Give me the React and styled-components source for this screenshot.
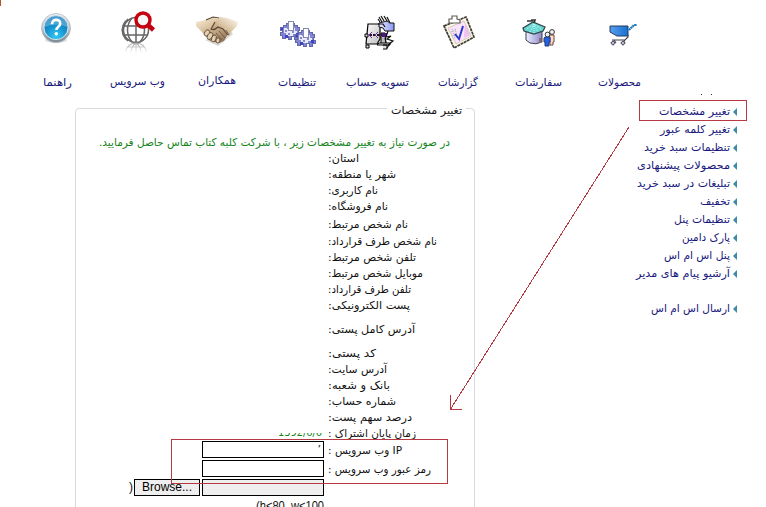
import React, { useLayoutEffect, useRef } from "react";
import styled, { createGlobalStyle } from "styled-components";

const Global = createGlobalStyle`
  * { box-sizing: border-box; }
  html, body { margin: 0; background: #fff; overflow: hidden; }
  body { font-family: "DejaVu Sans", "Noto Sans", sans-serif; font-size: 11px; }
`;

const Page = styled.div`
  position: relative;
  width: 766px;
  height: 507px;
  overflow: hidden;
  background: #fff;
`;

const CornerMark = styled.i`
  position: absolute;
  left: 0;
  top: 0;
  width: 1px;
  height: 6px;
  background: #b5532c;
`;

const TextBox = styled.span`
  display: block;
  flex: none;
  width: ${(p) => p.$w}px;
  height: 16px;
  line-height: 16px;
  direction: ltr;
`;

const TextInner = styled.span`
  display: inline-block;
  direction: ${(p) => p.$dir};
  white-space: pre;
  transform-origin: 0 50%;
`;

/* Keeps a label at its column width whatever the font's own metrics are. */
function Fit({ w, children, dir = "rtl" }) {
  const ref = useRef(null);
  useLayoutEffect(() => {
    const el = ref.current;
    el.style.transform = "none";
    el.style.transform = `scaleX(${w / el.getBoundingClientRect().width})`;
  }, [w, children]);
  return (
    <TextBox $w={w}>
      <TextInner ref={ref} $dir={dir}>{children}</TextInner>
    </TextBox>
  );
}

const Header = styled.header`
  display: flex;
  height: 96px;
`;

const NavItem = styled.a`
  display: flex;
  flex-direction: column;
  align-items: center;
  flex: none;
  width: ${(p) => p.$w}px;
  margin-left: ${(p) => p.$gap}px;
  color: #17177c;
  text-decoration: none;
`;

const IconSlot = styled.span`
  display: flex;
  align-items: flex-start;
  justify-content: center;
  width: 50px;
  height: ${(p) => p.$h}px;
  padding-top: 8px;
  margin: 0 ${(p) => -p.$shift}px 0 ${(p) => p.$shift}px;
  svg { flex: none; overflow: visible; }
`;

const IconPosition = styled.span`
  display: block;
  height: 0;
  margin-top: ${(p) => p.$y}px;
`;

const Body = styled.div`
  display: flex;
  height: 411px;
`;

const Panel = styled.fieldset`
  flex: none;
  width: 400px;
  height: 430px;
  margin: 7px 0 0 75px;
  padding: 0;
  border: 1px solid #d5dadb;
  border-radius: 4px;
  min-width: 0;
`;

const Legend = styled.legend`
  display: block;
  margin-left: 311px;
  padding: 0 4px;
  height: 10px;
  color: #111;
`;

const Notice = styled.p`
  margin: 22px 0 0 23px;
  height: 16px;
  color: #14831a;
`;

const Row = styled.div`
  display: flex;
  height: ${(p) => p.$h}px;
  padding-left: 252px;
  color: #111;
`;

const FormRow = styled.div`
  display: flex;
  align-items: flex-start;
  height: 19px;
  padding-left: ${(p) => p.$indent || 126}px;
  color: #111;
`;

const Input = styled.input`
  flex: none;
  width: 122px;
  height: 17px;
  padding: 0 2px;
  border: 1px solid #000;
  border-radius: 0;
  background: ${(p) => (p.$muted ? "#efefef" : "#fff")};
  color: #10214a;
  font: 11px "DejaVu Sans", sans-serif;
  text-align: right;
  outline: none;
`;

const FieldLabel = styled.span`
  display: block;
  margin: 2px 0 0 4px;
`;

const Browse = styled.button`
  width: 66px;
  height: 17px;
  margin: 0 2px 0 1px;
  padding: 0;
  border: 1px solid #000;
  border-radius: 0;
  background: #efefef;
  color: #000;
  font: 12px/15px "Liberation Sans", Arial, sans-serif;
`;

const Latin = styled.span`
  font: 12px/16px "Liberation Sans", Arial, sans-serif;
`;

const DateValue = styled.span`
  position: relative;
  display: block;
  width: 44px;
  height: 16px;
  margin: -1px 6px 0 -50px;
  color: #14831a;
  &::after {
    content: "";
    position: absolute;
    inset: 0 0 8px;
    background: #fff;
  }
`;

const Hint = styled.div`
  padding: 0 0 0 180px;
  color: #111;
  span { font-family: "Liberation Sans", Arial, sans-serif; font-size: 12px; }
`;

const Sidebar = styled.nav`
  display: flex;
  flex-direction: column;
  width: 120px;
  margin: 7px 0 0 142px;
`;

const SideLink = styled.a`
  display: flex;
  justify-content: flex-end;
  align-items: center;
  gap: 3px;
  height: 18px;
  margin-top: ${(p) => p.$gap || 0}px;
  color: #17177c;
  text-decoration: none;
`;

const Caret = styled.i`
  width: 0;
  height: 0;
  border: 4px solid transparent;
  border-left-width: 0;
  border-right-color: #3d8ca3;
`;

const Highlight = styled.div`
  position: absolute;
  left: ${(p) => p.$x}px;
  top: ${(p) => p.$y}px;
  width: ${(p) => p.$w}px;
  height: ${(p) => p.$h}px;
  border: 1px solid #b73a42;
`;

const Pointer = styled.svg`
  position: absolute;
  left: 440px;
  top: 120px;
`;

const Dots = styled.i`
  position: absolute;
  left: 701px;
  top: 94px;
  width: 1px;
  height: 1px;
  background: #333;
  box-shadow: 10px 0 #333;
`;

const HelpIcon = () => (
  <svg width="32" height="38" viewBox="0 0 32 38">
    <defs>
      <linearGradient id="rim" x2="0" y2="1"><stop stopColor="#edf1f3" /><stop offset=".55" stopColor="#b7c2c9" /><stop offset="1" stopColor="#768590" /></linearGradient>
      <radialGradient id="blue" cx=".5" cy=".85" r=".85"><stop stopColor="#35c9f5" /><stop offset=".5" stopColor="#1492cf" /><stop offset="1" stopColor="#1767ab" /></radialGradient>
    </defs>
    <ellipse cx="16" cy="31" rx="11" ry="3" fill="#bfc5c8" opacity=".6" />
    <circle cx="16" cy="19" r="14.5" fill="url(#rim)" stroke="#a9b3b9" strokeWidth=".7" />
    <circle cx="16" cy="18.6" r="12" fill="url(#blue)" stroke="#f4fafc" strokeWidth=".8" />
    <path d="M4.8 18a11.2 11.2 0 0 1 22.4 0q-11-5-22.4 0Z" fill="#8ed0ed" opacity=".45" />
    <path d="M12 15.2c-.3-5.8 8.7-5.6 8.2-.4-.3 3-3.8 3-3.8 6.2" fill="none" stroke="#fff" strokeWidth="2.6" />
    <circle cx="16.3" cy="24.7" r="1.7" fill="#fff" />
  </svg>
);

const GlobeIcon = () => (
  <svg width="36" height="46" viewBox="0 0 36 46">
    <defs><linearGradient id="fade" x2="0" y2="1"><stop stopColor="#aaa" /><stop offset="1" stopColor="#fff" /></linearGradient></defs>
    <g fill="none" stroke="#666" strokeWidth="1.5">
      <circle cx="17" cy="21" r="12.5" />
      <path d="M17 8.5v25M5 17h24M5 26h24M13 9c-6 7-6 17 0 24M21 9c6 7 6 17 0 24" />
      <path d="M9 10c-7 7-7 16 0 22M6.6 12c-4.5 6-4.5 12 0 18" strokeWidth="1.6" />
    </g>
    <path d="M6 44c2-9 8-10 11-10s9 1 11 10M12 44q0-7 5-10q5 3 5 10M17 34v10M9 38h16" fill="none" stroke="url(#fade)" strokeWidth="1.2" />
    <circle cx="24" cy="11" r="7" fill="#f5f5f5" stroke="#c50010" strokeWidth="3.4" />
    <path d="m29 16 5.5 5" stroke="#c50010" strokeWidth="4.5" />
  </svg>
);

const HandsIcon = () => (
  <svg width="44" height="34" viewBox="0 0 44 34">
    <defs>
      <linearGradient id="skin" x2=".7" y2="1"><stop stopColor="#fff3df" /><stop offset=".45" stopColor="#d9c19f" /><stop offset="1" stopColor="#927658" /></linearGradient>
      <linearGradient id="skin2" x1="1" x2="0" y2="1"><stop stopColor="#fffdf7" /><stop offset=".5" stopColor="#d9c3a1" /><stop offset="1" stopColor="#9b7d60" /></linearGradient>
    </defs>
    <path d="M10 27 23 33 38 21 35 17Z" fill="#b5b2ac" opacity=".5" />
    <path d="M1 9 11 7l7-3 8 4 7 13-4 7-5 2-9-2-5-6-6-6-3-3Z" fill="url(#skin)" />
    <path d="m43 9-11-4-7-1-5 5-4 7c3 2 5 0 7-2l5 2 6 7 2-4 6-6Z" fill="url(#skin2)" />
    <path d="m11 7 7-3 6 1m-4 4-4 7c3 2 5 0 7-2l5 2 5 6" fill="none" stroke="#5c4532" strokeWidth="1.1" />
    <g fill="#e3d0b0" stroke="#594431" strokeWidth=".8">
      <ellipse cx="12" cy="20" rx="2.5" ry="3.4" transform="rotate(35 12 20)" />
      <ellipse cx="15" cy="23" rx="2.4" ry="3.8" transform="rotate(30 15 23)" />
      <ellipse cx="19" cy="25.5" rx="2.2" ry="3.6" transform="rotate(20 19 25)" />
      <ellipse cx="23" cy="27.5" rx="2" ry="2.6" transform="rotate(10 23 27)" />
    </g>
    <path d="m24 18 6 7m-9-5 6 7m4-10 3 5" stroke="#6b523c" strokeWidth=".8" />
  </svg>
);

const Gear = ({ x, y }) => (
  <g transform={`translate(${x} ${y})`} shapeRendering="crispEdges">
    <path d="M0 6h3V4h3V2h8v2h3v2h2v3h-1v3h2v3h-3v3h-3v-3h-3v3H8v-3H5v2H2v-3H0v-3h2V9H0Z" fill="#8286ce" stroke="#6266ac" />
    <path d="M4 7h11v3h2v3h-4v2H6v-3H4Z" fill="#e8e9fb" />
    <path d="M5 9h2v2H5zm3 3h2v2H8zm4-2h2v2h-2zM15 7h2v2h-2zM7 6h2v2H7z" fill="#8589cd" />
    <path d="M8 0h5v9H8Z" fill="#fff" stroke="#8588b7" />
    <path d="M16 12h3v3h-3zM5 14h3v3H5zM1 7h2v2H1z" fill="#3c42c4" />
  </g>
);
const GearsIcon = () => <svg width="38" height="28" viewBox="0 0 38 28"><Gear x="1" y="0" /><Gear x="16" y="7" /></svg>;

const AccountIcon = () => (
  <svg width="32" height="34" viewBox="0 0 32 34">
    <defs><linearGradient id="hand"><stop stopColor="#e9ecff" /><stop offset="1" stopColor="#8b96f2" /></linearGradient><linearGradient id="paper" x2="1" y2="1"><stop stopColor="#fff" /><stop offset="1" stopColor="#bdbdbd" /></linearGradient></defs>
    <path d="M17 28h5l-1-11h-4Z" fill="#bbb" stroke="#000" />
    <path d="M2 28 4 8h12v15l-3 5Z" fill="url(#paper)" stroke="#000" strokeWidth="1.2" />
    <path d="M15 11v-4l4-1 4-1 3 2h4v8H21l-2-3Z" fill="url(#hand)" stroke="#111" strokeWidth="1" />
    <path d="m16 6-2-3m4 3-3-5m5 4-3-5m6 5-3-5m6 7-3-6M14 8h5l2 3" fill="none" stroke="#111" strokeWidth="1.2" />
    <path d="M5 19h16" stroke="#241331" strokeWidth="2" strokeDasharray="3 1" />
    <path d="m8 16-3 3 3 3m6-6-3 3 3 3" fill="none" stroke="#78329e" />
    <path d="M18 17h5v4h-5Z" fill="#4f167d" />
    <path d="M1 18h3v3H1Zm1 11h3v3H2Zm11 0h13v-2H15Zm6 0h4v4h-4" fill="#ddd" stroke="#000" />
    <path d="m24 15-2 6 5-1-4 3 6 2-5 4m-3-7 1 5m5-1-4 6" fill="none" stroke="#111" strokeWidth="1.2" />
  </svg>
);

const ReportIcon = () => (
  <svg width="34" height="34" viewBox="0 0 34 34">
    <path d="m2 10 22-9 8 20-20 11Z" fill="#faf8e8" stroke="#403d35" strokeWidth="1.7" strokeDasharray="3 .6" />
    <path d="m6 12 16-7 7 15-15 8Z" fill="#fbe4fb" stroke="#c4b9a0" strokeWidth=".7" />
    <path d="m23 7 5 12-6 3Z" fill="#efc0f0" />
    <path d="m10 13 3 10m0-10 3 9M9 16l5-2m-4 6 5-2" stroke="#aaa" strokeDasharray="1 1" />
    <path d="M7 7V3h3V0h5v3l3 1v3Z" fill="#fff" stroke="#605e58" strokeWidth="1.2" />
    <path d="m13 18 4 5 4-13" fill="none" stroke="#2b38cb" strokeWidth="2" />
  </svg>
);

const OrdersIcon = () => (
  <svg width="34" height="28" viewBox="0 0 34 28">
    <defs><linearGradient id="wall"><stop stopColor="#eef" /><stop offset="1" stopColor="#898bcc" /></linearGradient></defs>
    <path d="M4 10v11l4 3q6 2 12-1V10Z" fill="url(#wall)" stroke="#3c3e51" />
    <path d="M1 9 11 3l12 5-2 4-9 3-10-3Z" fill="#67d6d1" stroke="#334447" strokeWidth="1.3" />
    <path d="M5 10 12 5l7 5m-11 3 4-8 4 8m-4-8v9" stroke="#c5fffa" fill="none" strokeDasharray="1 1" />
    <path d="M5 2h5v-1h3l-1 3" fill="none" stroke="#333" strokeWidth="1.7" />
    <path d="M17 19h2v5h-2Z" fill="#946457" />
    <path d="M27 16h5v7h-1v3h-3v-7Z" fill="#ffdccb" stroke="#694741" />
    <circle cx="30" cy="13" r="2.4" fill="#f4f4f4" stroke="#333" />
    <path d="M23 18h5v5h-1v4h-4v-4h-1v-4Z" fill="#2663dd" stroke="#233c80" />
    <circle cx="25.5" cy="15.5" r="2.4" fill="#e6edf5" stroke="#333" />
  </svg>
);

const CartIcon = () => (
  <svg width="28" height="25" viewBox="0 0 28 25">
    <defs><linearGradient id="cart" x1="1" x2="0"><stop stopColor="#1670d1" /><stop offset="1" stopColor="#5a9eec" /></linearGradient></defs>
    <path d="M1 3h18v10H8L1 9Z" fill="url(#cart)" stroke="#243d60" />
    <path d="m20 7 5-5h3" fill="none" stroke="#237cbd" strokeWidth="2.2" strokeDasharray="2 .4" />
    <path d="M19 12v2l-3 3H3m2 0 2 3m9-3-2 3" fill="none" stroke="#493d4d" strokeWidth="1.1" />
    <g fill="#fff" stroke="#56566d" strokeWidth="1.1"><path d="m4 18 2 2-2 2-2-2Zm10 0 2 2-2 2-2-2Z" /></g>
  </svg>
);

const nav = [
  ["راهنما", 29, 43, 75, -2, HelpIcon, 1],
  ["وب سرویس", 55, 38, 74, -1, GlobeIcon, 1],
  ["همکاران", 38, 33, 73, 0, HandsIcon, 5],
  ["تنظیمات", 38, 42, 75, 1, GearsIcon, 13],
  ["تسویه حساب", 63, 30, 75, 2, AccountIcon, 8],
  ["گزارشات", 40, 29, 75, 1, ReportIcon, 8],
  ["سفارشات", 47, 37, 75, 0, OrdersIcon, 11],
  ["محصولات", 43, 36, 75, 3, CartIcon, 15],
];

const fields = [
  ["استان:", 31, 16], ["شهر یا منطقه:", 68, 16], ["نام کاربری:", 50, 16],
  ["نام فروشگاه:", 60, 18], ["نام شخص مرتبط:", 80, 17], ["نام شخص طرف قرارداد:", 109, 16],
  ["تلفن شخص مرتبط:", 88, 16], ["موبایل شخص مرتبط:", 95, 16], ["تلفن طرف قرارداد:", 83, 16],
  ["پست الکترونیکی:", 82, 24], ["آدرس کامل پستی:", 87, 24], ["کد پستی:", 48, 16],
  ["آدرس سایت:", 59, 16], ["بانک و شعبه:", 62, 16], ["شماره حساب:", 68, 16],
  ["درصد سهم پست:", 84, 16],
];

const links = [
  ["تغییر مشخصات", 71], ["تغییر کلمه عبور", 70], ["تنظیمات سبد خرید", 86],
  ["محصولات پیشنهادی", 93], ["تبلیغات در سبد خرید", 93], ["تخفیف", 30],
  ["تنظیمات پنل", 56], ["پارک دامین", 48], ["پنل اس ام اس", 66],
  ["آرشیو پیام های مدیر", 94], ["ارسال اس ام اس", 79, 17],
];

export default function App() {
  return (
    <Page>
      <Global />
      <Header>
        {nav.map(([label, w, gap, h, shift, Icon, y]) => (
          <NavItem key={label} $w={w} $gap={gap}>
            <IconSlot $h={h} $shift={shift}>
              <IconPosition $y={y}><Icon /></IconPosition>
            </IconSlot>
            <Fit w={w}>{label}</Fit>
          </NavItem>
        ))}
      </Header>
      <Body>
        <Panel>
          <Legend><Fit w={71}>تغییر مشخصات</Fit></Legend>
          <Notice><Fit w={351}>در صورت نیاز به تغییر مشخصات زیر ، با شرکت کلبه کتاب تماس حاصل فرمایید.</Fit></Notice>
          {fields.map(([label, w, h]) => (
            <Row key={label} $h={h}><Fit w={w}>{label}</Fit></Row>
          ))}
          <Row $h={15}>
            <DateValue><Fit w={44} dir="ltr">1392/6/6</Fit></DateValue>
            <Fit w={88}>زمان پایان اشتراک :</Fit>
          </Row>
          <FormRow>
            <Input defaultValue="’" />
            <FieldLabel><Fit w={74}>IP وب سرویس :</Fit></FieldLabel>
          </FormRow>
          <FormRow>
            <Input />
            <FieldLabel><Fit w={103}>رمز عبور وب سرویس :</Fit></FieldLabel>
          </FormRow>
          <FormRow $indent={53}>
            <Latin>)</Latin>
            <Browse>Browse...</Browse>
            <Input $muted readOnly />
          </FormRow>
          <Hint><Fit w={68} dir="ltr">(h&lt;80, w&lt;100</Fit></Hint>
        </Panel>
        <Sidebar>
          {links.map(([label, w, gap]) => (
            <SideLink key={label} $gap={gap}><Fit w={w}>{label}</Fit><Caret /></SideLink>
          ))}
        </Sidebar>
      </Body>
      <CornerMark />
      <Dots />
      <Highlight $x={639} $y={100} $w={108} $h={21} />
      <Highlight $x={171} $y={439} $w={277} $h={45} />
      <Pointer width="200" height="300" fill="none" stroke="#b73a42" shapeRendering="crispEdges">
        <path d="M189 7 10 290M10 275v15l12-1" />
      </Pointer>
    </Page>
  );
}
